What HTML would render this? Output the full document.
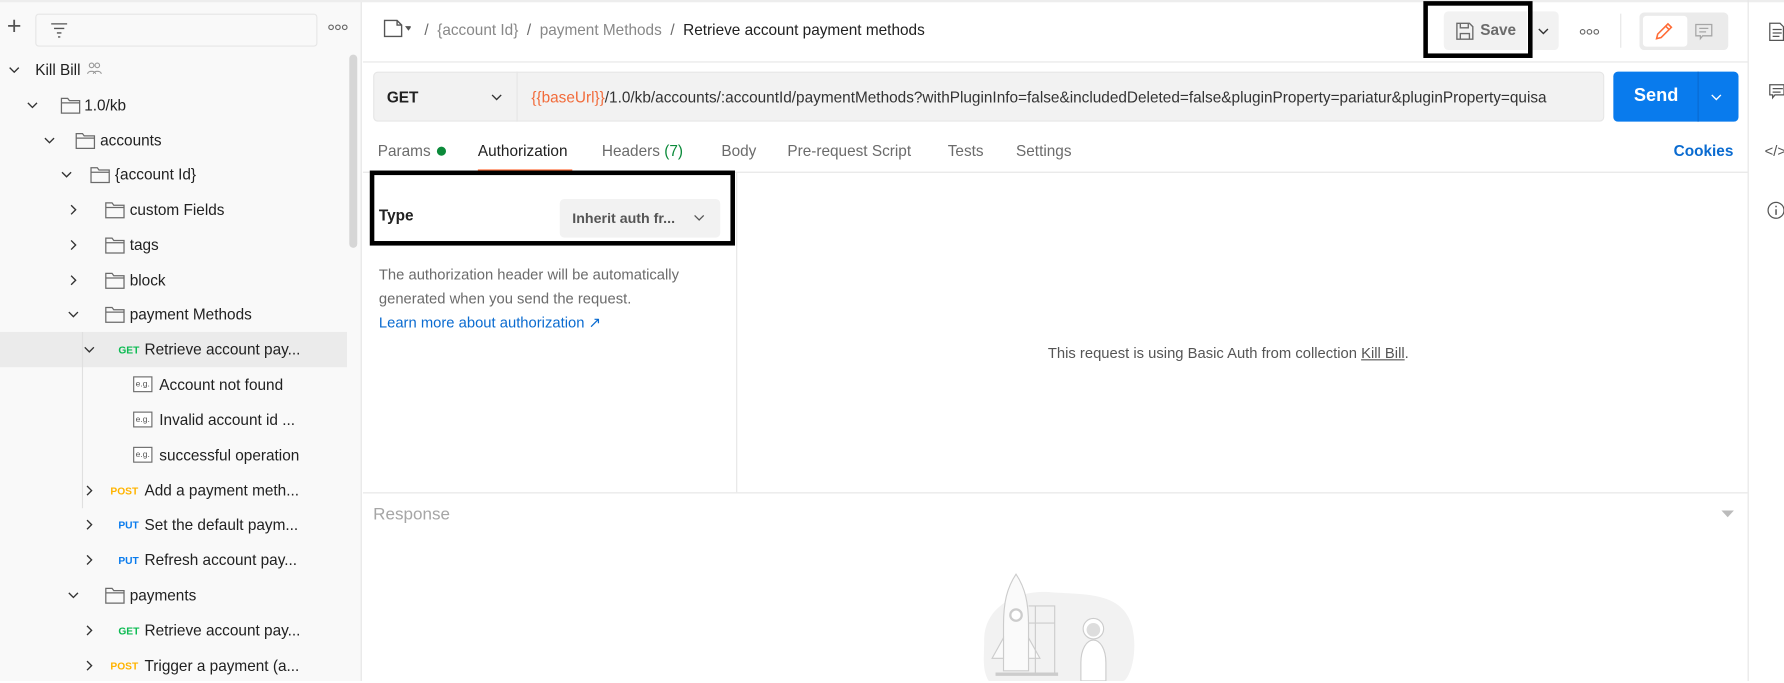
<!DOCTYPE html>
<html><head><meta charset="utf-8"><style>
*{box-sizing:border-box;margin:0;padding:0}
html,body{width:1784px;height:681px;overflow:hidden;background:#fff;font-family:"Liberation Sans",sans-serif}
#w{position:absolute;left:0;top:0;width:1568px;height:599px;transform:scale(1.13776,1.1369);transform-origin:0 0;color:#212121;font-size:13px}
.a{position:absolute;white-space:nowrap}
.row{position:absolute;left:0;width:305px;height:31px}
.row span{position:absolute;top:8px;white-space:nowrap;font-size:13.5px;color:#212121}
.chev{position:absolute;top:10px;width:11px;height:11px}
.fold{position:absolute;top:7px}
.m{font-size:9px!important;top:11px!important;font-weight:bold}
.eg{position:absolute;top:8px;width:17px;height:14px;border:1px solid #6b6b6b;font-size:7.5px;line-height:12px;text-align:center;color:#555;background:#fff}
.tab{position:absolute;top:125px;font-size:13.5px;color:#6b6b6b}
</style></head><body><div id="w">
<!-- sidebar -->
<div class="a" style="left:0;top:0;width:318px;height:599px;background:#f9f9f9;border-right:1px solid #e6e6e6"></div>
<div class="a" style="left:0;top:0;width:1568px;height:2px;background:#ededed"></div>
<div class="a" style="left:6px;top:10px;font-size:22px;color:#555;font-weight:300">+</div>
<div class="a" style="left:31px;top:12px;width:248px;height:29px;border:1px solid #e6e6e6;border-radius:3px;background:#f9f9f9"></div>
<svg class="a" style="left:44px;top:18px" width="16" height="16"><path d="M1 3h14M3.5 7h9M6 11h4M7 14.5h2" stroke="#555" stroke-width="1.2"/></svg>
<svg class="a" style="left:288px;top:20px" width="18" height="8"><circle cx="3" cy="4" r="2" fill="none" stroke="#666"/><circle cx="9" cy="4" r="2" fill="none" stroke="#666"/><circle cx="15" cy="4" r="2" fill="none" stroke="#666"/></svg>
<div class="a" style="left:307px;top:48px;width:7px;height:170px;background:#d6d6d6;border-radius:4px"></div>
<div class="a" style="left:0;top:292px;width:305px;height:31px;background:#ebebeb"></div>
<div class="a" style="left:72px;top:292px;width:1px;height:155px;background:#e0e0e0"></div>
<svg width="0" height="0" style="position:absolute"><defs>
<symbol id="cd" viewBox="0 0 11 11"><path d="M1.5 3.5l4 4 4-4" fill="none" stroke="#333" stroke-width="1.2"/></symbol>
<symbol id="cr" viewBox="0 0 11 11"><path d="M3.5 1.5l4 4-4 4" fill="none" stroke="#333" stroke-width="1.2"/></symbol>
<symbol id="fd" viewBox="0 0 18 17"><path d="M1 2.5h5.5l1.5 2h9v11h-16z M1 6.5h16" fill="none" stroke="#6b6b6b" stroke-width="1.1"/></symbol>
</defs></svg>
<div class="row" style="top:46px"><svg class="chev" style="left:7px"><use href="#cd"/></svg><span style="left:31px">Kill Bill</span>
<svg class="a" style="left:76px;top:8px" width="14" height="12"><circle cx="4.5" cy="3.5" r="2" fill="none" stroke="#999"/><circle cx="9.5" cy="3.5" r="2" fill="none" stroke="#999"/><path d="M1 11c0-3 7-3 7 0M6 11c0-3 7-3 7 0" fill="none" stroke="#999"/></svg></div>
<div class="row" style="top:77px"><svg class="chev" style="left:23px"><use href="#cd"/></svg><svg class="fold" style="left:53px" width="18" height="17"><use href="#fd"/></svg><span style="left:74px">1.0/kb</span></div>
<div class="row" style="top:108px"><svg class="chev" style="left:38px"><use href="#cd"/></svg><svg class="fold" style="left:66px" width="18" height="17"><use href="#fd"/></svg><span style="left:88px">accounts</span></div>
<div class="row" style="top:138px"><svg class="chev" style="left:53px"><use href="#cd"/></svg><svg class="fold" style="left:79px" width="18" height="17"><use href="#fd"/></svg><span style="left:101px">{account Id}</span></div>
<div class="row" style="top:169px"><svg class="chev" style="left:59px"><use href="#cr"/></svg><svg class="fold" style="left:92px" width="18" height="17"><use href="#fd"/></svg><span style="left:114px">custom Fields</span></div>
<div class="row" style="top:200px"><svg class="chev" style="left:59px"><use href="#cr"/></svg><svg class="fold" style="left:92px" width="18" height="17"><use href="#fd"/></svg><span style="left:114px">tags</span></div>
<div class="row" style="top:231px"><svg class="chev" style="left:59px"><use href="#cr"/></svg><svg class="fold" style="left:92px" width="18" height="17"><use href="#fd"/></svg><span style="left:114px">block</span></div>
<div class="row" style="top:261px"><svg class="chev" style="left:59px"><use href="#cd"/></svg><svg class="fold" style="left:92px" width="18" height="17"><use href="#fd"/></svg><span style="left:114px">payment Methods</span></div>
<div class="row" style="top:292px"><svg class="chev" style="left:73px"><use href="#cd"/></svg><span class="m" style="left:104px;color:#0cbb52">GET</span><span style="left:127px">Retrieve account pay...</span></div>
<div class="row" style="top:323px"><div class="eg" style="left:117px">e.g.</div><span style="left:140px">Account not found</span></div>
<div class="row" style="top:354px"><div class="eg" style="left:117px">e.g.</div><span style="left:140px">Invalid account id ...</span></div>
<div class="row" style="top:385px"><div class="eg" style="left:117px">e.g.</div><span style="left:140px">successful operation</span></div>
<div class="row" style="top:416px"><svg class="chev" style="left:73px"><use href="#cr"/></svg><span class="m" style="left:97px;color:#ffb400">POST</span><span style="left:127px">Add a payment meth...</span></div>
<div class="row" style="top:446px"><svg class="chev" style="left:73px"><use href="#cr"/></svg><span class="m" style="left:104px;color:#097bed">PUT</span><span style="left:127px">Set the default paym...</span></div>
<div class="row" style="top:477px"><svg class="chev" style="left:73px"><use href="#cr"/></svg><span class="m" style="left:104px;color:#097bed">PUT</span><span style="left:127px">Refresh account pay...</span></div>
<div class="row" style="top:508px"><svg class="chev" style="left:59px"><use href="#cd"/></svg><svg class="fold" style="left:92px" width="18" height="17"><use href="#fd"/></svg><span style="left:114px">payments</span></div>
<div class="row" style="top:539px"><svg class="chev" style="left:73px"><use href="#cr"/></svg><span class="m" style="left:104px;color:#0cbb52">GET</span><span style="left:127px">Retrieve account pay...</span></div>
<div class="row" style="top:570px"><svg class="chev" style="left:73px"><use href="#cr"/></svg><span class="m" style="left:97px;color:#ffb400">POST</span><span style="left:127px">Trigger a payment (a...</span></div>

<!-- header -->
<div class="a" style="left:319px;top:54px;width:1217px;height:1px;background:#e6e6e6"></div>
<svg class="a" style="left:337px;top:17px" width="24" height="16"><path d="M1 1h11l4 4v10h-15z M12 1v4h4" fill="none" stroke="#555" stroke-width="1.2"/><path d="M19 6h6l-3 4z" fill="#555"/></svg>
<div class="a" style="left:373px;top:19px;font-size:13.5px;color:#6b6b6b">/&nbsp; <span style="color:#888">{account Id}</span> &nbsp;/&nbsp; <span style="color:#888">payment Methods</span> &nbsp;/&nbsp; <span style="color:#212121">Retrieve account payment methods</span></div>
<div class="a" style="left:1269px;top:10px;width:101px;height:34px;background:#f2f2f2;border-radius:4px"></div>
<div class="a" style="left:1342px;top:10px;width:1px;height:34px;background:#fff"></div>
<svg class="a" style="left:1279px;top:19px" width="17" height="17"><path d="M1.5 1.5h11l3 3v11h-14z M4.5 1.5v4h7v-4 M4.5 15.5v-5h8v5" fill="none" stroke="#6b6b6b" stroke-width="1.2"/></svg>
<div class="a" style="left:1301px;top:19px;font-size:13.5px;font-weight:bold;color:#6b6b6b">Save</div>
<svg class="a" style="left:1351px;top:22px" width="11" height="11"><use href="#cd"/></svg>
<div class="a" style="left:1251px;top:1px;width:96px;height:50px;border:4px solid #000"></div>
<svg class="a" style="left:1388px;top:24px" width="18" height="8"><circle cx="3" cy="4" r="2" fill="none" stroke="#666"/><circle cx="9" cy="4" r="2" fill="none" stroke="#666"/><circle cx="15" cy="4" r="2" fill="none" stroke="#666"/></svg>
<div class="a" style="left:1424px;top:12px;width:1px;height:30px;background:#e6e6e6"></div>
<div class="a" style="left:1441px;top:11px;width:78px;height:33px;background:#ebebeb;border-radius:4px"></div>
<div class="a" style="left:1444px;top:14px;width:39px;height:27px;background:#fff;border-radius:3px"></div>
<svg class="a" style="left:1453px;top:19px" width="18" height="18"><path d="M3 15l1-4 9-9 3 3-9 9z M11 4l3 3" fill="none" stroke="#ff6c37" stroke-width="1.4"/></svg>
<svg class="a" style="left:1489px;top:20px" width="18" height="16"><path d="M1.5 1.5h14v10h-8l-2 2.5v-2.5h-4z M4.5 5h8M4.5 8h6" fill="none" stroke="#a6a6a6" stroke-width="1.1"/></svg>

<!-- url row -->
<div class="a" style="left:328px;top:63px;width:1082px;height:44px;background:#f2f2f2;border:1px solid #e6e6e6;border-radius:4px"></div>
<div class="a" style="left:454px;top:63px;width:1px;height:44px;background:#e6e6e6"></div>
<div class="a" style="left:340px;top:78px;font-size:13.5px;font-weight:bold">GET</div>
<svg class="a" style="left:431px;top:80px" width="11" height="11"><use href="#cd"/></svg>
<div class="a" style="left:467px;top:78px;width:940px;overflow:hidden;font-size:13.5px;color:#333"><span style="color:#f26b3a">{{baseUrl}}</span>/1.0/kb/accounts/:accountId/paymentMethods?withPluginInfo=false&amp;includedDeleted=false&amp;pluginProperty=pariatur&amp;pluginProperty=quisa</div>
<div class="a" style="left:1418px;top:63px;width:110px;height:44px;background:#097bed;border-radius:4px"></div>
<div class="a" style="left:1492px;top:63px;width:1px;height:44px;background:#0a6ad0"></div>
<div class="a" style="left:1436px;top:76px;font-size:16px;font-weight:bold;color:#fff">Send</div>
<svg class="a" style="left:1503px;top:80px" width="11" height="11"><path d="M1.5 3.5l4 4 4-4" fill="none" stroke="#fff" stroke-width="1.2"/></svg>

<!-- tabs -->
<div class="tab" style="left:332px">Params</div>
<div class="a" style="left:384px;top:129px;width:8px;height:8px;border-radius:50%;background:#0b8a3a"></div>
<div class="tab" style="left:420px;color:#212121">Authorization</div>
<div class="a" style="left:420px;top:149px;width:83px;height:2px;background:#ff6c37"></div>
<div class="tab" style="left:529px">Headers <span style="color:#0b8a3a">(7)</span></div>
<div class="tab" style="left:634px">Body</div>
<div class="tab" style="left:692px">Pre-request Script</div>
<div class="tab" style="left:833px">Tests</div>
<div class="tab" style="left:893px">Settings</div>
<div class="tab" style="left:1471px;color:#0a6bd0;font-weight:bold">Cookies</div>
<div class="a" style="left:319px;top:151px;width:1217px;height:1px;background:#e6e6e6"></div>

<!-- auth -->
<div class="a" style="left:647px;top:152px;width:1px;height:281px;background:#e6e6e6"></div>
<div class="a" style="left:333px;top:182px;font-size:13.5px;font-weight:bold">Type</div>
<div class="a" style="left:492px;top:175px;width:141px;height:34px;background:#f2f2f2;border-radius:4px"></div>
<div class="a" style="left:503px;top:185px;font-size:12.5px;color:#555;font-weight:bold">Inherit auth fr...</div>
<svg class="a" style="left:609px;top:186px" width="11" height="11"><path d="M1.5 3.5l4 4 4-4" fill="none" stroke="#555" stroke-width="1.1"/></svg>
<div class="a" style="left:325px;top:150px;width:321px;height:66px;border:4px solid #000"></div>
<div class="a" style="left:333px;top:231px;font-size:13px;color:#6b6b6b;line-height:21px">The authorization header will be automatically<br>generated when you send the request.<br><span style="color:#0a6bd0">Learn more about authorization ↗</span></div>
<div class="a" style="left:921px;top:303px;font-size:13px;color:#555">This request is using Basic Auth from collection <span style="text-decoration:underline">Kill Bill</span>.</div>

<!-- response -->
<div class="a" style="left:319px;top:433px;width:1217px;height:1px;background:#e6e6e6"></div>
<div class="a" style="left:328px;top:444px;font-size:15px;color:#a6a6a6">Response</div>
<svg class="a" style="left:1513px;top:449px" width="11" height="7"><path d="M0 0h11l-5.5 6z" fill="#bbb"/></svg>
<svg class="a" style="left:860px;top:503px" width="140" height="96" viewBox="0 0 140 96">
<path d="M5 60c0-30 30-45 60-42 30 2 62 0 70 30 6 25-3 48-8 48h-118c-6-10-4-20-4-36z" fill="#f2f2f2"/>
<path d="M33 2c-8 12-11 25-11 45v40h22v-40c0-20-3-33-11-45z" fill="#fafafa" stroke="#ccc"/>
<circle cx="33" cy="38" r="5" fill="#fff" stroke="#ccc" stroke-width="2"/>
<path d="M22 58l-10 18h10z M44 58l10 18h-10z" fill="#fafafa" stroke="#ccc"/>
<path d="M44 30h23v60 M50 30v60 M44 45h23" fill="none" stroke="#ccc"/>
<path d="M15 90h55" stroke="#ccc" stroke-width="3"/>
<circle cx="101" cy="50" r="9" fill="#fff" stroke="#ccc"/><circle cx="101" cy="51" r="6" fill="#ddd"/>
<path d="M90 80c0-12 5-20 11-20s11 8 11 20v16h-22z" fill="#fff" stroke="#ccc"/>
</svg>

<!-- right rail -->
<div class="a" style="left:1536px;top:0;width:1px;height:599px;background:#e6e6e6"></div>
<svg class="a" style="left:1554px;top:19px" width="14" height="18"><path d="M1.5 1.5h9l3 3v12h-12z M4 7h8M4 10h8M4 13h6" fill="none" stroke="#555" stroke-width="1.1"/></svg>
<svg class="a" style="left:1554px;top:73px" width="14" height="16"><path d="M1.5 1.5h12.5v9h-8l-2 2.5v-2.5h-2.5z M4 5h9M4 8h7" fill="none" stroke="#555" stroke-width="1.1"/></svg>
<div class="a" style="left:1551px;top:125px;font-size:13px;color:#555">&lt;/&gt;</div>
<svg class="a" style="left:1553px;top:177px" width="16" height="16"><circle cx="8" cy="8" r="7" fill="none" stroke="#555" stroke-width="1.1"/><path d="M8 7v5M8 4v1.3" stroke="#555" stroke-width="1.3"/></svg>
</div></body></html>
